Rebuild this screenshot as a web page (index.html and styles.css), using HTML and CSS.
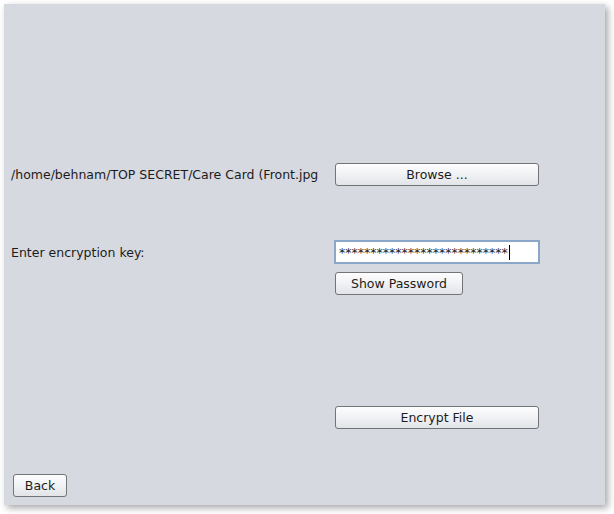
FILE: index.html
```html
<!DOCTYPE html>
<html>
<head>
<meta charset="utf-8">
<link rel="stylesheet" href="styles.css">
</head>
<body>
<div class="window">
  <div class="row row-file">
    <div class="label">/home/behnam/TOP SECRET/Care Card (Front.jpg</div>
    <button class="btn btn-wide">Browse ...</button>
  </div>
  <div class="row row-key">
    <div class="label">Enter encryption key:</div>
    <div class="field"><span class="stars">***************************</span><span class="caret"></span></div>
  </div>
  <div class="row row-show">
    <div class="label"></div>
    <button class="btn btn-show">Show Password</button>
  </div>
  <div class="row row-encrypt">
    <div class="label"></div>
    <button class="btn btn-wide">Encrypt File</button>
  </div>
  <div class="row row-back">
    <button class="btn btn-back">Back</button>
  </div>
</div>
</body>
</html>
```
FILE: styles.css
```css
html, body {
  margin: 0;
  padding: 0;
  background: #ffffff;
}
body {
  width: 614px;
  height: 514px;
  overflow: hidden;
  font-family: "DejaVu Sans", sans-serif;
  font-size: 12.5px;
  color: #1c1c1c;
}
.window {
  margin: 4px 0 0 4px;
  width: 601px;
  height: 501px;
  background: #d6d9e0;
  box-shadow: 3px 3px 7px rgba(0, 0, 0, 0.35);
  display: flex;
  flex-direction: column;
  box-sizing: border-box;
}
.row {
  display: flex;
  align-items: center;
}
.label {
  width: 323px;
  padding-left: 7px;
  white-space: nowrap;
  flex: none;
}
.row-file { margin-top: 159px; }
.row-key { margin-top: 54px; }
.row-show { margin-top: 8px; }
.row-encrypt { margin-top: 111px; }
.row-back { margin-top: 45px; padding-left: 9px; }

.btn {
  font-family: "DejaVu Sans", sans-serif;
  font-size: 12.5px;
  color: #1c1c1c;
  height: 23px;
  box-sizing: border-box;
  border: 1px solid #737478;
  border-radius: 3px;
  background: linear-gradient(to bottom, #fdfdfe 0%, #f2f3f5 45%, #e3e4e8 100%);
  padding: 0;
  margin: 0 0 0 1px;
}
.btn-wide { width: 204px; }
.btn-show { width: 128px; }
.btn-back { width: 54px; margin-left: 0; }

.field {
  width: 206px;
  height: 24px;
  box-sizing: border-box;
  border: 2px solid #8ba6c9;
  background: #ffffff;
  display: flex;
  align-items: center;
  padding-left: 3px;
}
.stars {
  font-size: 12.5px;
  line-height: 1;
  padding-top: 3px;
}
.caret {
  display: inline-block;
  width: 1px;
  height: 15px;
  background: #000;
  margin-left: 1px;
}
```
